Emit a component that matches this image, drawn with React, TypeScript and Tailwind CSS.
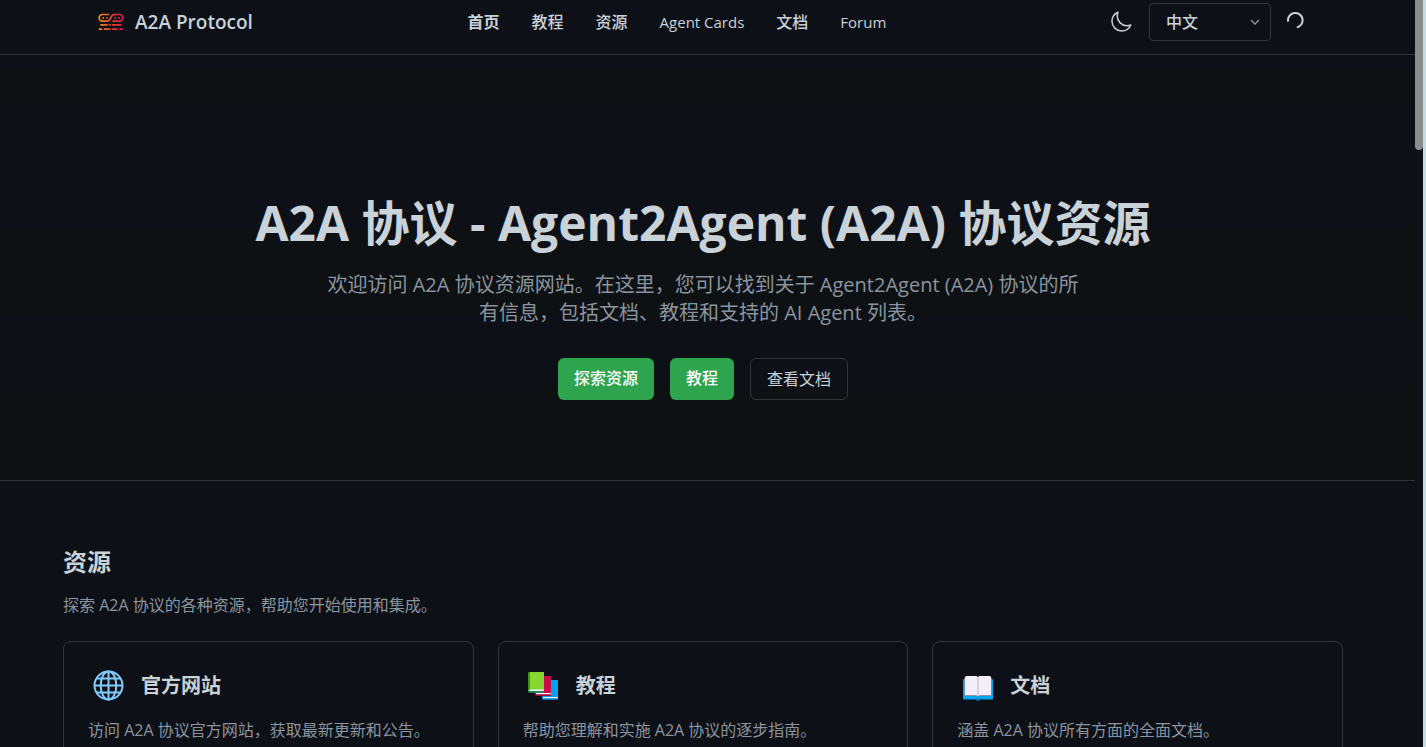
import { useState } from 'react'
import type { ReactNode } from 'react'

const navItems = [
  { label: '首页', href: '#home', style: 'text-base font-bold' },
  { label: '教程', href: '#tutorials', style: 'text-base font-medium' },
  { label: '资源', href: '#resources', style: 'text-base font-medium' },
  { label: 'Agent Cards', href: '#agent-cards', style: 'text-[15px]' },
  { label: '文档', href: '#docs', style: 'text-base font-medium' },
  { label: 'Forum', href: '#forum', style: 'text-[15px]' },
]

function Logo() {
  return (
    <svg width="26" height="18" viewBox="0 0 26 18" fill="none" aria-hidden="true">
      <defs>
        <linearGradient id="logo" x1="0" y1="0" x2="26" y2="0" gradientUnits="userSpaceOnUse">
          <stop offset="0" stopColor="#f99a0c" />
          <stop offset="0.45" stopColor="#ee4a22" />
          <stop offset="1" stopColor="#dc1563" />
        </linearGradient>
      </defs>
      <g stroke="url(#logo)" strokeWidth="1.7" strokeLinecap="round">
        <path d="M10.800 1.500H4.500a3.300 3.300 0 0 0 0 6.700H9c2.200 0 3-1.400 3.700-3.300s1.600-3.400 3.900-3.400h5a3.300 3.300 0 0 1 0 6.700h-6.400" />
        <path d="M3 11.900h6.500M11.800 11.900h.400M14.500 11.900H23" />
        <path d="M1.500 16.200h2M6.500 16.200h5.500M14.800 16.200h4.200M22.200 16.200h2.300" />
      </g>
      <g fill="url(#logo)">
        <circle cx="5.200" cy="4.900" r="1" />
        <circle cx="8.800" cy="4.900" r="1" />
        <circle cx="17.400" cy="4.900" r="1" />
        <circle cx="21" cy="4.900" r="1" />
      </g>
    </svg>
  )
}

function MoonIcon() {
  return (
    <svg width="24" height="24" viewBox="0 0 24 24" fill="none" stroke="currentColor" strokeWidth="1.5" strokeLinecap="round" strokeLinejoin="round" aria-hidden="true">
      <path d="M21.752 15.002A9.718 9.718 0 0 1 18 15.750c-5.385 0-9.750-4.365-9.750-9.750 0-1.330.266-2.597.748-3.752A9.753 9.753 0 0 0 3 11.250C3 16.635 7.365 21 12.750 21a9.753 9.753 0 0 0 9.002-5.998Z" />
    </svg>
  )
}

function ArcIcon() {
  return (
    <svg width="18" height="18" viewBox="0 0 18 18" fill="none" stroke="currentColor" strokeWidth="2" aria-hidden="true">
      <path d="M1.100 10.600A7.300 7.300 0 1 1 9.800 16.400" />
    </svg>
  )
}

function GlobeIcon() {
  return (
    <svg width="32" height="32" viewBox="0 0 32 32" fill="none" stroke="#83cbff" strokeWidth="2" aria-hidden="true">
      <circle cx="16.500" cy="15.500" r="14" />
      <ellipse cx="16.500" cy="15.500" rx="7.800" ry="14" />
      <path d="M16.500 1.500v28M2.500 15.500h28M4.500 8.500h24M4.500 22.500h24" />
    </svg>
  )
}

function BooksIcon() {
  return (
    <svg width="32" height="32" viewBox="0 0 32 32" aria-hidden="true">
      <path d="M15 10h16v20H17a2 2 0 0 1-2-2z" fill="#00a6ed" />
      <path d="M16 27h15v1.500H16.500z" fill="#f3eef8" />
      <path d="M16 28.500h15V30H17z" fill="#0074ba" />
      <path d="M8 6h16v20H10a2 2 0 0 1-2-2z" fill="#ca0b4a" />
      <path d="M9 23h15v1.500H9.500z" fill="#f3eef8" />
      <path d="M8.500 24.500H24V26H9.500z" fill="#990838" />
      <path d="M1 4a2 2 0 0 1 2-2h14v20.500H3a2 2 0 0 1-2-2z" fill="#86d72f" />
      <path d="M1 4a2 2 0 0 1 2-2v18l-2 1z" fill="#44911b" />
      <path d="M2.500 19.500H17V21H2z" fill="#f3eef8" />
      <path d="M1 20.500l1 .5h15v1.500H3a2 2 0 0 1-2-2z" fill="#008463" />
    </svg>
  )
}

function OpenBookIcon() {
  return (
    <svg width="32" height="32" viewBox="-1 0 32 32" aria-hidden="true">
      <path d="M2 9h28a1 1 0 0 1 1 1v18.500a1 1 0 0 1-1 1H18c-.5 1.500-3.500 1.500-4 0H2a1 1 0 0 1-1-1V10a1 1 0 0 1 1-1z" fill="#00a6ed" />
      <path d="M14 28.500h4v1c-.5 1.500-3.500 1.500-4 0z" fill="#0074ba" />
      <path d="M2.500 8v18H15l1 1 1-1h12.500V8l-1-1.500H17l-1 1-1-1H3.500z" fill="#998ea4" />
      <path d="M3 7.500A1.500 1.500 0 0 1 4.500 6h9.700c1 0 1.600.8 1.600 1.800V26c-.5-.7-1.300-1-2.300-1H3z" fill="#f3eef8" />
      <path d="M29 7.500A1.500 1.500 0 0 0 27.500 6h-9.700c-1 0-1.600.8-1.600 1.800V26c.5-.7 1.300-1 2.300-1H29z" fill="#f3eef8" />
      <path d="M15.500 8h1v18h-1z" fill="#cdc4d6" />
    </svg>
  )
}

const resources = [
  { icon: <GlobeIcon />, title: '官方网站', text: '访问 A2A 协议官方网站，获取最新更新和公告。' },
  { icon: <BooksIcon />, title: '教程', text: '帮助您理解和实施 A2A 协议的逐步指南。' },
  { icon: <OpenBookIcon />, title: '文档', text: '涵盖 A2A 协议所有方面的全面文档。' },
]

function ResourceCard({ icon, title, text }: { icon: ReactNode; title: string; text: string }) {
  return (
    <article className="rounded-lg border border-[#30363d] p-6 pb-8">
      <div className="mb-3 flex items-center gap-[13px]">
        <span className="flex size-10 items-center justify-center">{icon}</span>
        <h3 className="text-xl font-bold">{title}</h3>
      </div>
      <p className="text-base text-[#8b949e]">{text}</p>
    </article>
  )
}

function Header() {
  const [lang, setLang] = useState('zh')

  return (
    <header className="border-b border-[#30363d] pt-[3px] pr-[9px] pb-[13px]">
      <div className="mx-auto flex max-w-7xl items-center justify-between pr-[30px] pl-[35px]">
        <a href="#home" className="flex items-center gap-[11px] text-[19px] font-semibold">
          <Logo />
          A2A Protocol
        </a>
        <nav className="flex items-center gap-8">
          {navItems.map((item) => (
            <a key={item.label} href={item.href} className={item.style}>
              {item.label}
            </a>
          ))}
        </nav>
        <div className="flex h-[38px] items-center gap-2">
          <button type="button" aria-label="切换主题" className="p-2">
            <MoonIcon />
          </button>
          <div className="relative">
            <select
              aria-label="语言"
              value={lang}
              onChange={(e) => setLang(e.target.value)}
              className="h-[38px] w-[122px] appearance-none rounded border border-[#30363d] bg-[#0d1117] px-4 text-base font-medium"
            >
              <option value="zh">中文</option>
              <option value="en">English</option>
            </select>
            <svg
              className="pointer-events-none absolute top-3 right-2 text-[#8b949e]"
              width="14"
              height="14"
              viewBox="0 0 14 14"
              fill="none"
              stroke="currentColor"
              strokeWidth="1.5"
              aria-hidden="true"
            >
              <path d="M2 5l4 4 4-4" />
            </svg>
          </div>
          <button type="button" aria-label="账户" className="p-2 pt-1">
            <ArcIcon />
          </button>
        </div>
      </div>
    </header>
  )
}

export default function App() {
  return (
    <div className="flex h-screen overflow-hidden bg-[#0d1117] font-['Open_Sans','Noto_Sans_CJK_SC',sans-serif] text-[#c9d1d9]">
      <div className="min-w-0 flex-1">
        <Header />
        <section className="border-b border-[#30363d] bg-[linear-gradient(to_bottom,#0d1117_3%,#0e1113_4%,#0e1113_11%,#0d1117_12%,#0d1117_40%,#0e1113_41%,#0e1113_61%,#0d1117_62%,#0d1117_77%,#0e1113_79%)] pt-36 pr-[9px] pb-20 text-center">
          <h1 className="mb-6 text-5xl leading-none font-bold">A2A 协议 - Agent2Agent (A2A) 协议资源</h1>
          <p className="mx-auto mb-[31px] max-w-3xl text-xl text-[#8b949e]">
            欢迎访问 A2A 协议资源网站。在这里，您可以找到关于 Agent2Agent (A2A) 协议的所有信息，包括文档、教程和支持的 AI Agent 列表。
          </p>
          <div className="flex justify-center gap-4">
            <a href="#resources" className="flex h-[42px] items-center rounded-md bg-[#2ea44f] px-4 pb-[2px] font-medium text-white">
              探索资源
            </a>
            <a href="#tutorials" className="flex h-[42px] items-center rounded-md bg-[#2ea44f] px-4 pb-[2px] font-medium text-white">
              教程
            </a>
            <a href="#docs" className="flex h-[42px] items-center rounded-md border border-[#30363d] px-4">
              查看文档
            </a>
          </div>
        </section>
        <main className="pt-[65px] pr-[9px]">
          <section id="resources" className="mx-auto max-w-7xl">
            <h2 className="mb-[15px] text-2xl font-bold">资源</h2>
            <p className="mb-6 text-base text-[#8b949e]">探索 A2A 协议的各种资源，帮助您开始使用和集成。</p>
            <div className="grid grid-cols-3 gap-6">
              {resources.map((item) => (
                <ResourceCard key={item.title} {...item} />
              ))}
            </div>
          </section>
        </main>
      </div>
      <div className="w-2 shrink-0">
        <div className="h-[150px] rounded-b bg-[#8b8b8b]" />
      </div>
      <div className="w-[3px] shrink-0 bg-[#c5dce0]" />
    </div>
  )
}
